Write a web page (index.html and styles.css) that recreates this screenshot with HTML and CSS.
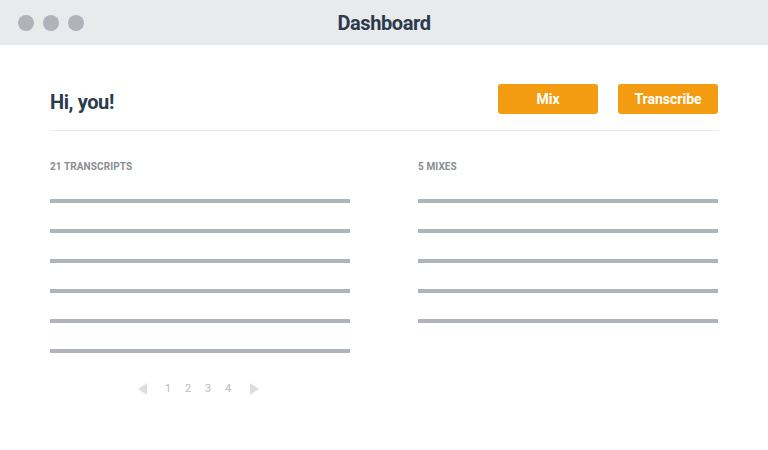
FILE: index.html
```html
<!DOCTYPE html>
<html>
<head>
<meta charset="utf-8">
<link rel="stylesheet" href="styles.css">
</head>
<body>
<div class="window">
  <header class="titlebar">
    <div class="dots"><span class="dot"></span><span class="dot"></span><span class="dot"></span></div>
    <div class="title">Dashboard</div>
  </header>
  <main class="content">
    <div class="top">
      <h1 class="greeting">Hi, you!</h1>
      <div class="actions">
        <button class="btn">Mix</button>
        <button class="btn">Transcribe</button>
      </div>
    </div>
    <div class="columns">
      <section class="col">
        <h2 class="label">21 TRANSCRIPTS</h2>
        <ul class="list">
          <li></li><li></li><li></li><li></li><li></li><li></li>
        </ul>
        <nav class="pager">
          <span class="tri tri-left"></span>
          <span class="num">1</span>
          <span class="num">2</span>
          <span class="num">3</span>
          <span class="num">4</span>
          <span class="tri tri-right"></span>
        </nav>
      </section>
      <section class="col">
        <h2 class="label">5 MIXES</h2>
        <ul class="list">
          <li></li><li></li><li></li><li></li><li></li>
        </ul>
      </section>
    </div>
  </main>
</div>
</body>
</html>
```
FILE: styles.css
```css
* { box-sizing: border-box; }
html, body { margin: 0; padding: 0; background: #fff; }
body { width: 768px; height: 450px; overflow: hidden; font-family: Roboto, "Open Sans", "Liberation Sans", sans-serif; }

.titlebar {
  position: relative;
  height: 45px;
  background: #e9eaec;
  display: flex;
  align-items: center;
  justify-content: center;
}
.dots {
  position: absolute;
  left: 18px;
  top: 15px;
  display: flex;
  gap: 9px;
}
.dot { width: 16px; height: 16px; border-radius: 50%; background: #aeb4ba; }
.title {
  font-size: 20px;
  font-weight: 700;
  color: #2b3a4e;
  letter-spacing: -0.4px;
}

.content { padding: 39px 50px 0 50px; }
.top {
  display: flex;
  justify-content: space-between;
  align-items: center;
  height: 30px;
  margin-bottom: 16px;
}
.greeting {
  margin: 0;
  font-size: 20px;
  font-weight: 700;
  color: #2b3a4e;
  letter-spacing: -0.4px;
  position: relative;
  top: 3px;
}
.actions { display: flex; gap: 20px; }
.btn {
  width: 100px;
  height: 30px;
  border: 0;
  border-radius: 3px;
  background: #f39c12;
  color: #fff;
  font-family: inherit;
  font-size: 14px;
  font-weight: 700;
  padding: 0;
}
.columns {
  border-top: 1px solid #e8e9ea;
  display: flex;
  gap: 68px;
  padding-top: 29px;
}
.col { width: 300px; }
.label {
  margin: 0;
  font-size: 10px;
  font-weight: 700;
  color: #8a8d90;
  line-height: 14px;
  letter-spacing: 0.1px;
}
.list { list-style: none; margin: 25px 0 0 0; padding: 0; display: flex; flex-direction: column; gap: 26px; }
.list li { height: 4px; background: #afb4ba; }

.pager {
  display: flex;
  align-items: center;
  margin: 29px 0 0 88px;
}
.num { font-size: 11px; color: #b9bcc0; width: 20px; text-align: center; }
.tri { width: 0; height: 0; border-top: 6px solid transparent; border-bottom: 6px solid transparent; }
.tri-left { border-right: 9px solid #dcdee0; margin-right: 11px; }
.tri-right { border-left: 9px solid #dcdee0; margin-left: 12px; }
```
